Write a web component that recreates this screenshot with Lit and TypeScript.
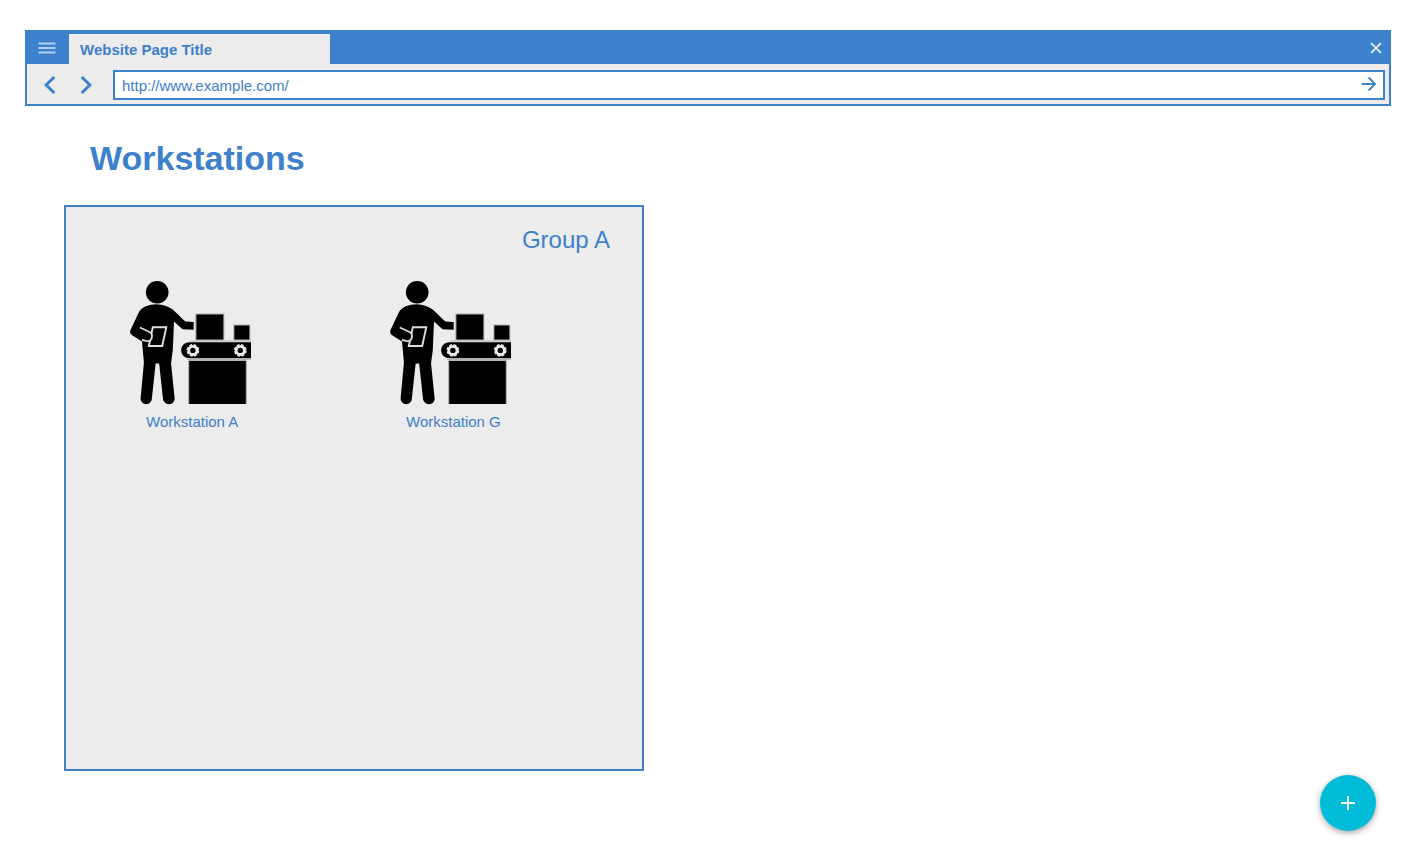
import { LitElement, html, svg, css } from "lit";
import { customElement, property, state } from "lit/decorators.js";

@customElement("workstation-tile")
class WorkstationTile extends LitElement {
  @property() name = "";

  static styles = css`
    :host {
      display: block;
    }
    .tile {
      display: block;
      width: 124px;
      color: #3d80cc;
      text-decoration: none;
      font-size: 15px;
      line-height: 18px;
    }
    .art {
      display: block;
      width: 124px;
      height: 126px;
    }
    .name {
      display: block;
      padding: 8px 0 0 18px;
      white-space: nowrap;
    }
  `;

  private gear(cx: number, cy: number) {
    return svg`
      <circle cx=${cx} cy=${cy} r="4.1" fill="none" stroke="#ececec" stroke-width="2.8" />
      <circle cx=${cx} cy=${cy} r="5.7" fill="none" stroke="#ececec" stroke-width="1.4" stroke-dasharray="2.9 1.58" />`;
  }

  render() {
    return html`
      <a class="tile" href="#">
        <svg class="art" viewBox="128 279 124 126" aria-hidden="true">
          <circle cx="157.2" cy="292.2" r="11.3" />
          <path
            d="M156.5 304.3 C163 304.3 168 306.5 172 309 C175 311 180 317 185.5 321.5 L193.7 322 V329.8 L182.5 329.2 L174 321.5 L172.8 350 L171 363.5 H144 L142 341.5 L132.5 335.5 C130.3 334 129.6 332 130.5 330 L138.5 313 C141.5 307 149 304.3 156.5 304.3 Z"
          />
          <path d="M144 362 L140.6 398 C140.5 406 151 406 151.8 399 L155.8 362 Z" />
          <path d="M159 362 L163 399 C164 406 175 406 174.6 398 L170.9 362 Z" />
          <path d="M152.8 327.2 H166.3 L162.2 346 H148.8 Z" stroke="#dedede" stroke-width="1.9" />
          <path d="M139.800 327.500 L149.500 332 C153.500 334 152.500 341 147.500 341.200 L142 340" fill="#000" stroke="#dedede" stroke-width="1.8" />
          <path d="M134 329 L139 328.500 L148.500 333 C151.500 334.500 151 340.300 147.500 340.300 L136 336.500 Z" />
          <g stroke="#b4b4b4" stroke-width="1">
            <rect x="195.9" y="314" width="28" height="26" />
            <rect x="233.9" y="325" width="16" height="15" />
          </g>
          <path d="M188.7 404 V360.5 H246.3 V404" stroke="#b4b4b4" stroke-width="1" />
          <path d="M190 341 H251 M187 359.5 H251" stroke="#b4b4b4" stroke-width="1" />
          <path d="M251 342.3 V358.3 H189.5 C178.4 358.3 178.4 342.3 189.5 342.3 Z" />
          ${this.gear(192.9, 350.4)} ${this.gear(240.3, 350.4)}
        </svg>
        <span class="name">${this.name}</span>
      </a>
    `;
  }
}

@customElement("browser-bar")
class BrowserBar extends LitElement {
  @state() private url = "http://www.example.com/";

  static styles = css`
    :host {
      display: block;
      border: 2px solid #3d80cc;
      background: #ececec;
      color: #3d80cc;
    }
    button {
      display: flex;
      align-items: center;
      justify-content: center;
      margin: 0;
      padding: 0;
      border: 0;
      background: none;
      color: inherit;
      cursor: pointer;
    }
    .tabs {
      display: flex;
      height: 32px;
      background: #3d80cc;
    }
    .menu {
      width: 42px;
      padding-right: 2px;
      color: #b4cfee;
    }
    .tab {
      box-sizing: border-box;
      width: 261px;
      margin: 2px auto 0 0;
      padding: 0 11px;
      background: #ececec;
      font-size: 15px;
      font-weight: bold;
      line-height: 32px;
      white-space: nowrap;
    }
    .close {
      width: 26px;
      color: #fff;
    }
    .tools {
      display: flex;
      align-items: center;
      height: 38px;
      padding: 2px 4px 0 14px;
    }
    .nav {
      width: 18px;
      height: 24px;
      margin-right: 18px;
    }
    .address {
      display: flex;
      flex: 1;
      box-sizing: border-box;
      height: 30px;
      border: 2px solid #3d80cc;
      background: #fff;
    }
    .url {
      flex: 1;
      min-width: 0;
      padding: 0 7px;
      border: 0;
      outline: 0;
      background: none;
      color: inherit;
      font: inherit;
      font-size: 15px;
    }
    .go {
      width: 28px;
      height: 24px;
    }
  `;

  render() {
    return html`
      <div class="tabs">
        <button class="menu" type="button" aria-label="Menu">
          <svg width="18" height="12" viewBox="0 0 18 12" stroke="currentColor" stroke-width="1.8">
            <path d="M0.5 1.5H17.5M0.5 6H17.5M0.5 10.5H17.5" />
          </svg>
        </button>
        <div class="tab">Website Page Title</div>
        <button class="close" type="button" aria-label="Close">
          <svg width="12" height="12" viewBox="0 0 12 12" stroke="currentColor" stroke-width="1.6">
            <path d="M1 1L11 11M11 1L1 11" />
          </svg>
        </button>
      </div>
      <div class="tools">
        <button class="nav" type="button" aria-label="Back">
          <svg width="18" height="20" viewBox="0 0 18 20" fill="none" stroke="currentColor" stroke-width="3">
            <path d="M13.3 2L5.1 10L13.3 18" />
          </svg>
        </button>
        <button class="nav" type="button" aria-label="Forward">
          <svg width="18" height="20" viewBox="0 0 18 20" fill="none" stroke="currentColor" stroke-width="3">
            <path d="M4.7 2L12.9 10L4.7 18" />
          </svg>
        </button>
        <form class="address" @submit=${(e: Event) => e.preventDefault()}>
          <input
            class="url"
            type="text"
            aria-label="Address"
            .value=${this.url}
            @input=${(e: Event) => (this.url = (e.target as HTMLInputElement).value)}
          />
          <button class="go" type="submit" aria-label="Go">
            <svg width="16" height="16" viewBox="0 0 16 16" fill="none" stroke="currentColor" stroke-width="1.8">
              <path d="M0.7 8H14.5M7.5 1.5L14.2 8L7.5 14.5" />
            </svg>
          </button>
        </form>
      </div>
    `;
  }
}

@customElement("app-root")
class AppRoot extends LitElement {
  @state() private stations = ["Workstation A", "Workstation G"];

  static styles = css`
    :host {
      display: block;
      box-sizing: border-box;
      min-height: 100vh;
      padding: 30px 17px 32px 25px;
      background: #fff;
      color: #3d80cc;
      font-family: "Liberation Sans", Arial, sans-serif;
    }
    .title {
      margin: 32px 0 27px 65px;
      font-size: 34px;
      line-height: 40px;
    }
    .group {
      box-sizing: border-box;
      max-width: 580px;
      min-height: 566px;
      margin-left: 39px;
      padding: 18px 32px 24px 62px;
      border: 2px solid #3d80cc;
      background: #ececec;
    }
    .group-name {
      margin: 0 0 24px;
      font-size: 24px;
      font-weight: normal;
      line-height: 30px;
      text-align: right;
    }
    .stations {
      display: flex;
      flex-wrap: wrap;
      gap: 24px 136px;
    }
    .add {
      position: fixed;
      right: 32px;
      bottom: 26px;
      display: flex;
      align-items: center;
      justify-content: center;
      width: 56px;
      height: 56px;
      padding: 0;
      border: 0;
      border-radius: 50%;
      background: #00bcd8;
      color: #fff;
      box-shadow: 0 2px 6px rgba(0, 0, 0, 0.36);
      cursor: pointer;
    }
  `;

  render() {
    return html`
      <browser-bar></browser-bar>
      <main>
        <h1 class="title">Workstations</h1>
        <section class="group" aria-labelledby="group-a">
          <h2 class="group-name" id="group-a">Group A</h2>
          <div class="stations">
            ${this.stations.map((name) => html`<workstation-tile .name=${name}></workstation-tile>`)}
          </div>
        </section>
      </main>
      <button class="add" type="button" aria-label="Add">
        <svg width="14" height="14" viewBox="0 0 14 14" fill="currentColor">
          <path d="M6 0h2v6h6v2H8v6H6V8H0V6h6z" />
        </svg>
      </button>
    `;
  }
}
